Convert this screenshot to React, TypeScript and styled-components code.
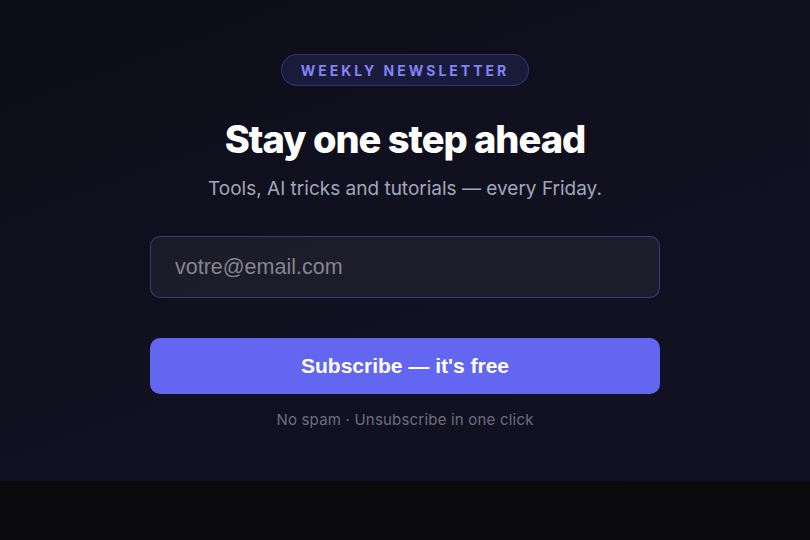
import styled, { createGlobalStyle } from 'styled-components';

const GlobalStyle = createGlobalStyle`
  * { box-sizing: border-box; }
  html, body {
    margin: 0;
    padding: 0;
    background: #0b0b0e;
    font-family: Inter, "Noto Sans", sans-serif;
  }
`;

const Page = styled.div`
  min-height: 540px;
  background: #0b0b0e;
`;

const Section = styled.section`
  height: 481px;
  padding-top: 54px;
  display: flex;
  flex-direction: column;
  align-items: center;
  background: linear-gradient(160deg, #0d0e19 0%, #10101f 50%, #121124 100%);
`;

const Badge = styled.div`
  height: 32px;
  padding: 0 19px;
  display: flex;
  align-items: center;
  border-radius: 16px;
  background: rgba(99, 102, 241, 0.14);
  border: 1px solid rgba(99, 102, 241, 0.32);
  color: #8184f4;
  font-size: 14px;
  font-weight: 700;
  letter-spacing: 3px;
  text-transform: uppercase;
`;

const Title = styled.h1`
  margin: 30px 0 0;
  font-size: 38px;
  line-height: 46px;
  font-weight: 800;
  letter-spacing: -1px;
  color: #ffffff;
`;

const Subtitle = styled.p`
  margin: 15px 0 0;
  font-size: 19px;
  line-height: 24px;
  color: #a3a6bb;
`;

const Form = styled.form`
  width: 510px;
  margin-top: 35px;
  display: flex;
  flex-direction: column;
  gap: 40px;
`;

const EmailInput = styled.input`
  height: 62px;
  padding: 0 24px;
  border-radius: 10px;
  border: 1px solid rgba(99, 102, 241, 0.42);
  background: rgba(255, 255, 255, 0.05);
  color: #fff;
  font-family: "Liberation Sans", Arial, sans-serif;
  font-size: 21.5px;
  outline: none;

  &::placeholder {
    color: #85858f;
  }
`;

const SubmitButton = styled.button`
  height: 56px;
  border: none;
  border-radius: 10px;
  background: #6366f1;
  color: #ffffff;
  font-family: "Liberation Sans", Arial, sans-serif;
  font-size: 21px;
  font-weight: 700;
  cursor: pointer;
`;

const Note = styled.p`
  margin: 17px 0 0;
  font-size: 15px;
  line-height: 18px;
  letter-spacing: 0.2px;
  color: #6c6e80;
`;

export default function App() {
  return (
    <Page>
      <GlobalStyle />
      <Section>
        <Badge>Weekly Newsletter</Badge>
        <Title>Stay one step ahead</Title>
        <Subtitle>Tools, AI tricks and tutorials — every Friday.</Subtitle>
        <Form onSubmit={e => e.preventDefault()}>
          <EmailInput type="email" placeholder="votre@email.com" />
          <SubmitButton type="submit">Subscribe — it's free</SubmitButton>
        </Form>
        <Note>No spam · Unsubscribe in one click</Note>
      </Section>
    </Page>
  );
}
